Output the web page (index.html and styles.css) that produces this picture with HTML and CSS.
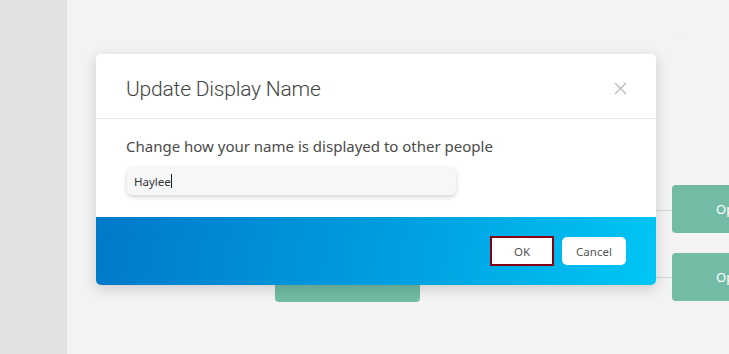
FILE: index.html
```html
<!DOCTYPE html>
<html>
<head>
<meta charset="utf-8">
<link rel="stylesheet" href="styles.css">
</head>
<body>
<div class="app">
  <aside class="sidebar"></aside>
  <main class="canvas">
    <div class="tick"></div>
    <div class="node node-a"><span>Op</span></div>
    <div class="node node-b"><span>Op</span></div>
    <div class="node node-c"></div>
    <div class="link link-a"></div>
    <div class="link link-b"></div>
  </main>
</div>
<div class="modal">
  <div class="modal-header">
    <h2 class="modal-title">Update Display Name</h2>
    <span class="modal-close">
      <svg width="13" height="13" viewBox="0 0 13 13"><path d="M1 1L12 12M12 1L1 12" stroke="#bdbdbd" stroke-width="1.4" fill="none"/></svg>
    </span>
  </div>
  <div class="modal-body">
    <p class="modal-text">Change how your name is displayed to other people</p>
    <div class="input"><span>Haylee</span><span class="caret"></span></div>
  </div>
  <div class="modal-footer">
    <button class="btn btn-ok">OK</button>
    <button class="btn btn-cancel">Cancel</button>
  </div>
</div>
</body>
</html>
```

FILE: styles.css
```css
html, body {
  margin: 0;
  padding: 0;
  width: 729px;
  height: 354px;
  overflow: hidden;
  font-family: "Noto Sans", "Open Sans", sans-serif;
}
.app {
  display: flex;
  width: 729px;
  height: 354px;
}
.sidebar {
  width: 67px;
  background: #e0e1e3;
  flex: none;
}
.canvas {
  flex: 1;
  background: #f3f3f3;
  position: relative;
}
.tick {
  position: absolute;
  left: 609px;
  top: 35px;
  width: 7px;
  height: 1px;
  background: #e9efd2;
}
.node {
  position: absolute;
  background: #72bca5;
  border-radius: 4px;
  color: #fff;
  font-size: 13px;
  display: flex;
  align-items: center;
}
.node span { padding-left: 44px; }
.node-a { left: 605px; top: 185px; width: 80px; height: 48px; }
.node-b { left: 605px; top: 253px; width: 80px; height: 48px; }
.node-c { left: 208px; top: 260px; width: 145px; height: 42px; }
.link {
  position: absolute;
  height: 1px;
  background: #d8d8d8;
  left: 589px;
  width: 16px;
}
.link-a { top: 210px; }
.link-b { top: 277px; }

.modal {
  position: absolute;
  left: 96px;
  top: 54px;
  width: 560px;
  background: #fff;
  border-radius: 5px;
  box-shadow: 0 4px 14px rgba(0,0,0,0.16);
  overflow: hidden;
}
.modal-header {
  height: 65px;
  box-sizing: border-box;
  border-bottom: 1px solid #e6e6e6;
  display: flex;
  align-items: center;
  justify-content: space-between;
  padding: 5px 29px 0 30px;
}
.modal-title {
  margin: 0;
  font-family: Roboto, "Noto Sans", sans-serif;
  font-weight: 300;
  font-size: 21px;
  color: #444;
  letter-spacing: -0.2px;
}
.modal-close {
  display: flex;
}
.modal-body {
  padding: 17px 30px 22px 30px;
}
.modal-text {
  margin: 0 0 11px 0;
  font-size: 15px;
  line-height: 20px;
  color: #4a4a4a;
  font-family: "Noto Sans", sans-serif;
}
.input {
  width: 329px;
  height: 28px;
  margin-left: 1px;
  background: #f6f7f9;
  border-radius: 6px;
  box-shadow: 0 2px 5px rgba(0,0,0,0.18);
  display: flex;
  align-items: center;
  padding-left: 7px;
  box-sizing: border-box;
  font-size: 11.5px;
  color: #333;
}
.caret {
  width: 1px;
  height: 14px;
  background: #222;
}
.modal-footer {
  height: 68px;
  background: linear-gradient(100deg, #0079c9 0%, #00a4e2 60%, #00c6f6 100%);
  display: flex;
  align-items: center;
  justify-content: flex-end;
  gap: 8px;
  padding-right: 30px;
}
.btn {
  font-family: "Noto Sans", sans-serif;
  font-size: 11.5px;
  color: #555;
  background: #fff;
  cursor: pointer;
  width: 64px;
}
.btn-ok {
  height: 30px;
  border: 2px solid #850012;
  border-radius: 0;
}
.btn-cancel {
  height: 28px;
  border: none;
  border-radius: 5px;
}
```
